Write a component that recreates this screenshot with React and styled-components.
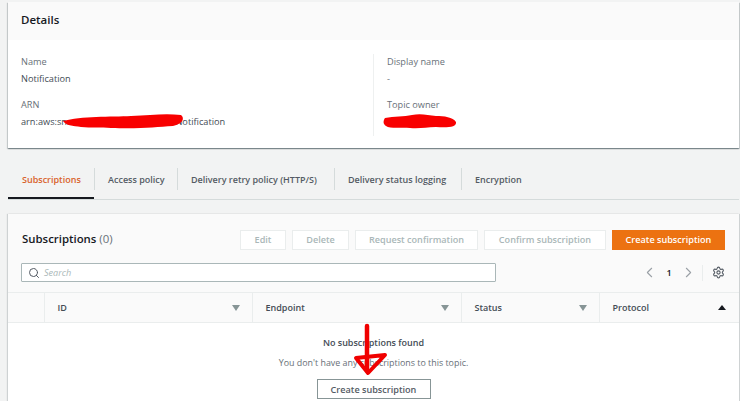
import React from 'react'
import styled, { createGlobalStyle } from 'styled-components'
import { Search, ChevronLeft, ChevronRight, Settings } from 'lucide-react'

const GlobalStyle = createGlobalStyle`
  html, body {
    margin: 0;
    padding: 0;
    background: #f2f3f3;
    font-family: "Open Sans", "Liberation Sans", sans-serif;
    color: #16191f;
  }
`

function App() {
  return (
    <Page>
      <GlobalStyle />
      <DetailsCard>
        <CardHeader>Details</CardHeader>
        <DetailsBody>
          <Column>
            <Label>Name</Label>
            <Value>Notification</Value>
            <Label second>ARN</Label>
            <Value>arn:aws:sns:us-east-1:00000000000:Notification</Value>
          </Column>
          <Column divided>
            <Label>Display name</Label>
            <Value muted>-</Value>
            <Label second>Topic owner</Label>
            <Value>000000000000</Value>
          </Column>
        </DetailsBody>
        <Scribble width="124" height="18" viewBox="0 0 124 18" left={61} top={112}>
          <path d="M2 9 C20 4 50 5 70 4 C90 3 105 1 120 3 C124 6 122 12 112 14 C95 15 80 17 50 16 C40 15 30 16 20 15 C12 14 4 13 2 9Z" fill="#f80000" />
        </Scribble>
        <Scribble width="76" height="18" viewBox="0 0 76 18" left={382} top={112}>
          <path d="M3 6 C12 4 22 5 30 3 C38 1 46 3 54 4 C62 4 71 5 74 10 C75 15 66 16 54 15 C44 15 38 17 28 16 C20 15 8 17 4 14 C1 12 1 9 3 6Z" fill="#f80000" />
        </Scribble>
      </DetailsCard>

      <Tabs>
        <Tab active width={86}>Subscriptions</Tab>
        <Tab width={83}>Access policy</Tab>
        <Tab width={157}>Delivery retry policy (HTTP/S)</Tab>
        <Tab width={127}>Delivery status logging</Tab>
        <Tab width={100}>Encryption</Tab>
      </Tabs>

      <SubscriptionsCard>
        <Toolbar>
          <Title>Subscriptions <Count>(0)</Count></Title>
          <Actions>
            <DisabledButton width={46}>Edit</DisabledButton>
            <DisabledButton width={57}>Delete</DisabledButton>
            <DisabledButton width={123}>Request confirmation</DisabledButton>
            <DisabledButton width={122}>Confirm subscription</DisabledButton>
            <PrimaryButton>Create subscription</PrimaryButton>
          </Actions>
        </Toolbar>
        <FilterRow>
          <SearchBox>
            <Search size={12} color="#545b64" strokeWidth={2} />
            <SearchText>Search</SearchText>
          </SearchBox>
          <Pager>
            <ChevronLeft size={17} color="#9aa0a6" strokeWidth={1.5} />
            <PageNumber>1</PageNumber>
            <ChevronRight size={17} color="#9aa0a6" strokeWidth={1.5} />
            <PagerDivider />
            <Settings size={13} color="#545b64" strokeWidth={2} />
          </Pager>
        </FilterRow>
        <TableHead>
          <CheckCell />
          <HeadCell width={208}>ID<SortDown /></HeadCell>
          <HeadCell width={209}>Endpoint<SortDown /></HeadCell>
          <HeadCell width={138}>Status<SortDown /></HeadCell>
          <HeadCell width={131} last>Protocol<SortUp /></HeadCell>
        </TableHead>
        <EmptyState>
          <EmptyTitle>No subscriptions found</EmptyTitle>
          <EmptyText>You don't have any subscriptions to this topic.</EmptyText>
          <OutlineButton>Create subscription</OutlineButton>
        </EmptyState>
      </SubscriptionsCard>

      <Scribble width="40" height="56" viewBox="0 0 40 56" left={350} top={323}>
        <path d="M17 3 L17 46" stroke="#f00000" strokeWidth="4.5" fill="none" strokeLinecap="round" />
        <path d="M6 35 L35 32 L18 50 Z" stroke="#f00000" strokeWidth="4" fill="none" strokeLinejoin="round" />
      </Scribble>
    </Page>
  )
}

const Page = styled.div`
  position: relative;
  width: 740px;
  height: 401px;
  overflow: hidden;
  padding: 2px 1px 0 8px;
  box-sizing: border-box;
`

const DetailsCard = styled.div`
  background: #fff;
  height: 146px;
  box-shadow: 0 1px 1px 0 rgba(0, 28, 36, 0.3), 1px 1px 1px 0 rgba(0, 28, 36, 0.15), -1px 1px 1px 0 rgba(0, 28, 36, 0.15);
`

const CardHeader = styled.div`
  display: flex;
  align-items: center;
  height: 35px;
  padding: 0 0 3px 13px;
  background: #fafafa;
  font-size: 11.5px;
  font-weight: 600;
`

const DetailsBody = styled.div`
  display: grid;
  grid-template-columns: 365px 1fr;
  padding-top: 14px;
`

const Column = styled.div`
  display: flex;
  flex-direction: column;
  height: 82px;
  padding-left: 13px;
  border-left: ${props => (props.divided ? '1px solid #eef0f0' : 'none')};
`

const Label = styled.div`
  font-size: 9.2px;
  line-height: 16px;
  color: #687078;
  margin-top: ${props => (props.second ? '10px' : '0')};
`

const Value = styled.div`
  font-size: 9.2px;
  line-height: 16px;
  margin-top: 1px;
  color: ${props => (props.muted ? '#687078' : '#444c55')};
`

const Scribble = styled.svg`
  position: absolute;
  left: ${props => props.left}px;
  top: ${props => props.top}px;
`

const Tabs = styled.div`
  display: flex;
  align-items: center;
  height: 35px;
  margin-top: 16px;
  border-bottom: 1px solid #d5dbdb;
`

const Tab = styled.div`
  position: relative;
  display: flex;
  align-items: center;
  box-sizing: border-box;
  width: ${props => props.width}px;
  height: 100%;
  padding: 0 0 4px 14px;
  font-size: 9px;
  font-weight: 600;
  white-space: nowrap;
  color: ${props => (props.active ? '#d9622b' : '#545b64')};
  box-shadow: ${props => (props.active ? 'inset 0 -2px 0 #16191f' : 'none')};

  &:not(:first-child)::before {
    content: '';
    position: absolute;
    left: 0;
    top: 4px;
    height: 22px;
    width: 1px;
    background: #d5dbdb;
  }
`

const SubscriptionsCard = styled.div`
  margin-top: 14px;
  height: 190px;
  background: #fafafa;
  box-shadow: -1px 0 1px 0 rgba(0, 28, 36, 0.15), 1px 0 1px 0 rgba(0, 28, 36, 0.15);
`

const Toolbar = styled.div`
  display: flex;
  align-items: center;
  justify-content: space-between;
  padding: 16px 14px 0 14px;
  height: 19px;
`

const Title = styled.div`
  font-size: 11.4px;
  font-weight: 600;
  margin-top: -2px;
`

const Count = styled.span`
  font-weight: 400;
  color: #687078;
`

const Actions = styled.div`
  display: flex;
  gap: 6px;
`

const DisabledButton = styled.div`
  display: flex;
  align-items: center;
  justify-content: center;
  box-sizing: border-box;
  width: ${props => props.width}px;
  height: 20px;
  background: #fff;
  border: 1px solid #eaeded;
  font-size: 9.1px;
  font-weight: 600;
  color: #aab7b8;
  white-space: nowrap;
`

const PrimaryButton = styled.div`
  display: flex;
  align-items: center;
  justify-content: center;
  width: 113px;
  height: 20px;
  background: #ec7211;
  font-size: 9.1px;
  font-weight: 600;
  color: #fff;
  white-space: nowrap;
`

const FilterRow = styled.div`
  display: flex;
  align-items: center;
  justify-content: space-between;
  padding: 14px 14px 10px 13px;
`

const SearchBox = styled.div`
  display: flex;
  align-items: center;
  gap: 4px;
  box-sizing: border-box;
  width: 475px;
  height: 19px;
  padding-left: 6px;
  background: #fff;
  border: 1px solid #aab7b8;
  border-radius: 1px;
`

const SearchText = styled.span`
  font-size: 9.1px;
  font-style: italic;
  color: #aab7b8;
`

const Pager = styled.div`
  display: flex;
  align-items: center;
`

const PageNumber = styled.span`
  width: 22px;
  text-align: center;
  font-size: 9.1px;
  font-weight: 600;
  color: #16191f;
`

const PagerDivider = styled.div`
  width: 1px;
  height: 16px;
  margin: 0 9px 0 5px;
  background: #eaeded;
`

const TableHead = styled.div`
  display: flex;
  height: 31px;
  border-top: 1px solid #eaeded;
  border-bottom: 1px solid #eaeded;
  box-sizing: border-box;
`

const CheckCell = styled.div`
  width: 36px;
`

const HeadCell = styled.div`
  display: flex;
  align-items: center;
  justify-content: space-between;
  box-sizing: border-box;
  width: ${props => props.width}px;
  padding: 0 ${props => (props.last ? '4px' : '12px')} 0 12.5px;
  border-left: 1px solid #eaeded;
  font-size: 9px;
  font-weight: 600;
  color: #444c55;
`

const SortDown = styled.span`
  width: 0;
  height: 0;
  border-left: 4px solid transparent;
  border-right: 4px solid transparent;
  border-top: 6px solid #879596;
`

const SortUp = styled.span`
  width: 0;
  height: 0;
  border-left: 4px solid transparent;
  border-right: 4px solid transparent;
  border-bottom: 5px solid #16191f;
`

const EmptyState = styled.div`
  display: flex;
  flex-direction: column;
  align-items: center;
  height: 78px;
  padding-top: 12px;
  background: #fff;
  box-sizing: border-box;
`

const EmptyTitle = styled.div`
  font-size: 9px;
  font-weight: 600;
  line-height: 16px;
  color: #444c55;
`

const EmptyText = styled.div`
  margin-top: 4px;
  font-size: 8.9px;
  line-height: 16px;
  color: #687078;
`

const OutlineButton = styled.div`
  display: flex;
  align-items: center;
  justify-content: center;
  box-sizing: border-box;
  width: 114px;
  height: 20px;
  margin-top: 8px;
  background: #fff;
  border: 1px solid #879596;
  font-size: 9.1px;
  font-weight: 600;
  color: #545b64;
`

export default App
